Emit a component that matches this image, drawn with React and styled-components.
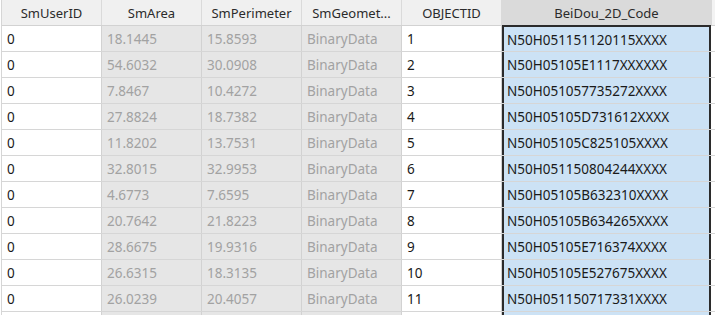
import React from "react";
import styled, { createGlobalStyle } from "styled-components";

const Global = createGlobalStyle`
  html, body { margin: 0; padding: 0; background: #ffffff; overflow: hidden; }
  body { font-family: "Noto Sans", "Segoe UI", sans-serif; }
`;

const Table = styled.div`
  margin-left: 1px;
  border-left: 1px solid #d6d6d6;
  width: 714px;
  height: 315px;
  overflow: hidden;
  display: flex;
  flex-direction: column;
  font-size: 13.5px;
`;

const Row = styled.div`
  display: flex;
  height: 25px;
  border-bottom: 1px solid ${(p) => (p.$header ? "#d2d2d2" : "#d6d6d6")};
  background: ${(p) => (p.$header ? "#f0f0f0" : "#ffffff")};
  flex: none;
`;

const HeadCell = styled.div`
  width: ${(p) => p.$w}px;
  flex: none;
  box-sizing: border-box;
  border-right: 1px solid #dadada;
  background: ${(p) => (p.$selected ? "#dadada" : "#f0f0f0")};
  color: #2b2b2b;
  font-size: 13px;
  display: flex;
  align-items: center;
  justify-content: center;
  white-space: nowrap;
  overflow: hidden;
`;

const Cell = styled.div`
  width: ${(p) => p.$w}px;
  flex: none;
  box-sizing: border-box;
  border-right: 1px solid #d2d2d2;
  background: ${(p) => (p.$readonly ? "#e6e6e6" : "#ffffff")};
  color: ${(p) => (p.$readonly ? "#a2a2a2" : "#1a1a1a")};
  display: flex;
  align-items: center;
  padding-left: 5px;
  padding-top: 1px;
  white-space: nowrap;
  overflow: hidden;
`;

const SelCell = styled.div`
  width: ${(p) => p.$w}px;
  flex: none;
  box-sizing: border-box;
  background: #cce2f5;
  color: #1a1a1a;
  border-left: 2px solid #2b2b2b;
  border-right: 2px solid #2b2b2b;
  border-top: ${(p) => (p.$first ? "2px solid #2b2b2b" : "none")};
  margin-top: ${(p) => (p.$first ? "-1px" : "0")};
  display: flex;
  align-items: center;
  padding-left: 3px;
  padding-top: 1px;
  white-space: nowrap;
  overflow: hidden;
`;

const Filler = styled.div`
  flex: 1;
  background: ${(p) => (p.$header ? "#f3f3f3" : "#ffffff")};
`;

const cols = [
  { name: "SmUserID", w: 100 },
  { name: "SmArea", w: 100, ro: true },
  { name: "SmPerimeter", w: 100, ro: true },
  { name: "SmGeomet...", w: 100, ro: true },
  { name: "OBJECTID", w: 100 },
];
const selW = 209;

const data = [
  ["0", "18.1445", "15.8593", "BinaryData", "1", "N50H051151120115XXXX"],
  ["0", "54.6032", "30.0908", "BinaryData", "2", "N50H05105E1117XXXXXX"],
  ["0", "7.8467", "10.4272", "BinaryData", "3", "N50H051057735272XXXX"],
  ["0", "27.8824", "18.7382", "BinaryData", "4", "N50H05105D731612XXXX"],
  ["0", "11.8202", "13.7531", "BinaryData", "5", "N50H05105C825105XXXX"],
  ["0", "32.8015", "32.9953", "BinaryData", "6", "N50H051150804244XXXX"],
  ["0", "4.6773", "7.6595", "BinaryData", "7", "N50H05105B632310XXXX"],
  ["0", "20.7642", "21.8223", "BinaryData", "8", "N50H05105B634265XXXX"],
  ["0", "28.6675", "19.9316", "BinaryData", "9", "N50H05105E716374XXXX"],
  ["0", "26.6315", "18.3135", "BinaryData", "10", "N50H05105E527675XXXX"],
  ["0", "26.0239", "20.4057", "BinaryData", "11", "N50H051150717331XXXX"],
  ["", "", "", "", "", ""],
];

export default function App() {
  return (
    <>
      <Global />
      <Table>
        <Row $header>
          {cols.map((c) => (
            <HeadCell key={c.name} $w={c.w}>
              {c.name}
            </HeadCell>
          ))}
          <HeadCell $w={selW + 1} $selected>
            BeiDou_2D_Code
          </HeadCell>
          <Filler $header />
        </Row>
        {data.map((r, i) => (
          <Row key={i}>
            {cols.map((c, j) => (
              <Cell key={j} $w={c.w} $readonly={c.ro}>
                {r[j]}
              </Cell>
            ))}
            <SelCell $w={selW} $first={i === 0}>
              {r[5]}
            </SelCell>
            <Filler />
          </Row>
        ))}
      </Table>
    </>
  );
}
